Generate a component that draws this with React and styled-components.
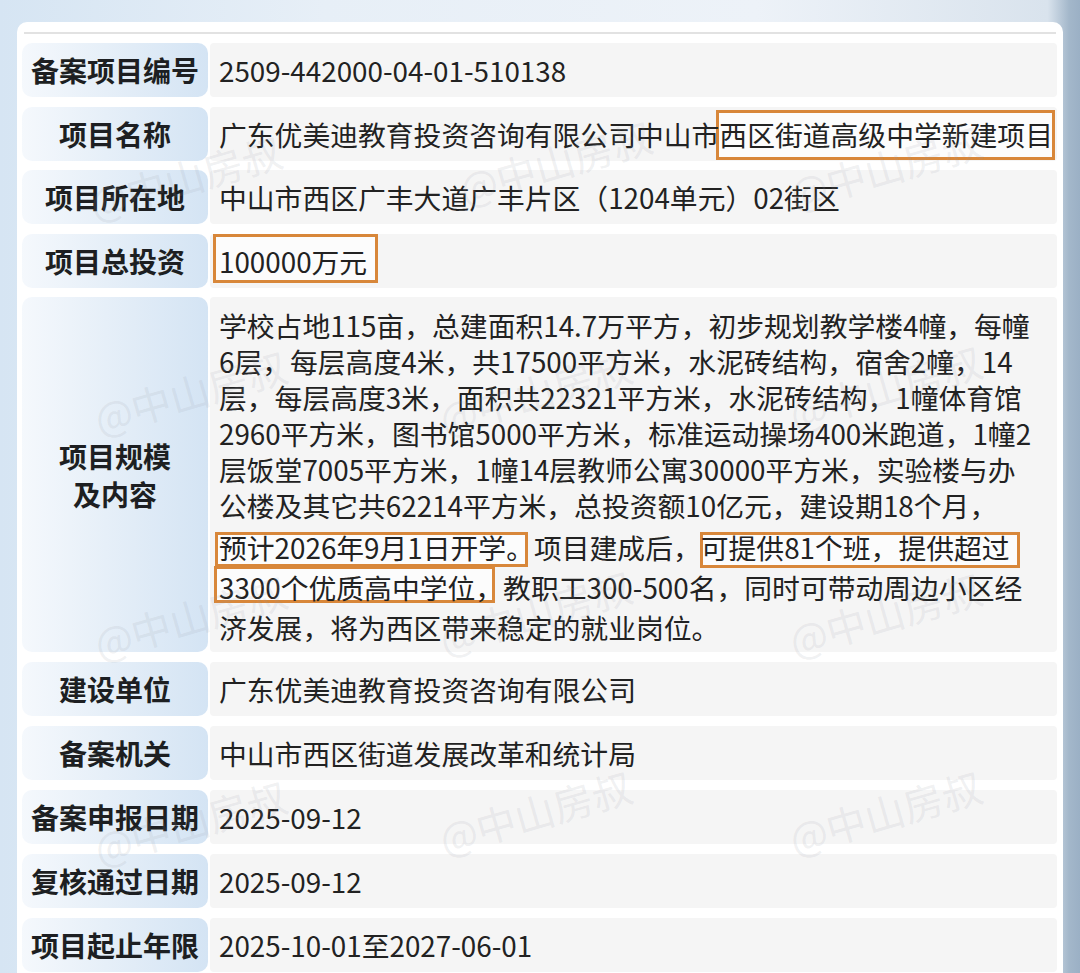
import React from 'react';
import styled, { createGlobalStyle } from 'styled-components';

const GlobalStyle = createGlobalStyle`
  html, body { margin: 0; padding: 0; }
  body { font-family: "Noto Sans CJK SC", "Noto Sans", sans-serif; }
`;

const Page = styled.div`
  position: relative;
  height: 973px;
  overflow: hidden;
  box-sizing: border-box;
  padding: 22px 17px 0;
  background: linear-gradient(90deg, #d6e5f3 0%, #e7eff7 30%, #edf2f8 70%, #d9e3ed 97%, #a3b7ca 99%, #9bb0c5 100%);
`;

const Card = styled.section`
  background: #fff;
  border-radius: 10px 10px 0 0;
  padding: 10px 6px 0 5px;
  height: 100%;
  box-sizing: border-box;
`;

const Rule = styled.div`
  height: 2px;
  margin: 0 1px 9px 2px;
  background: #e2e2e2;
`;

const Table = styled.div`
  display: flex;
  flex-direction: column;
`;

const Row = styled.div`
  display: grid;
  grid-template-columns: 186px 1fr;
  column-gap: 2px;
  min-height: 54px;
  margin-bottom: ${(p) => p.$gap}px;
`;

const Label = styled.div`
  display: flex;
  align-items: center;
  justify-content: center;
  text-align: center;
  border-radius: 10px;
  background: linear-gradient(90deg, rgba(238, 244, 251, 0.6) 0%, #e6eff8 45%, #d4e4f4 100%);
  font-weight: 700;
  font-size: 28px;
  line-height: 38px;
  color: #1d1f22;
  white-space: pre-line;
`;

const Value = styled.div`
  position: relative;
  z-index: 0;
  background: #f5f5f5;
  border-radius: 4px;
  padding: ${(p) => (p.$block ? '10px 0 5px 9px' : '0 0 0 9px')};
  font-size: 27.8px;
  line-height: ${(p) => (p.$block ? '36px' : '54px')};
  color: #222;
  white-space: nowrap;
`;

const Line = styled.div`
  height: ${(p) => p.$h || 36}px;
  line-height: ${(p) => p.$h || 36}px;
  margin-top: ${(p) => p.$mt || 0}px;
`;

const Mark = styled.span`
  position: relative;
  &::after {
    content: '';
    position: absolute;
    z-index: -1;
    top: ${(p) => p.$t}px;
    right: ${(p) => p.$r}px;
    bottom: ${(p) => p.$b}px;
    left: ${(p) => p.$l}px;
    border: 3px solid #d8873a;
    background: #fcfcfc;
    pointer-events: none;
  }
`;

const Watermarks = styled.div`
  position: absolute;
  inset: 0;
  pointer-events: none;
`;

const Watermark = styled.span`
  position: absolute;
  font-family: "Noto Sans CJK SC", sans-serif;
  font-size: 40px;
  color: rgba(150, 155, 165, 0.15);
  transform: rotate(-16deg);
  transform-origin: left center;
  white-space: nowrap;
`;

const marks = [
  [90, 175], [460, 160], [790, 165],
  [95, 390], [440, 390], [790, 385],
  [95, 615], [440, 610], [790, 612],
  [95, 820], [440, 810], [790, 810],
];

const rows = [
  { label: '备案项目编号', value: '2509-442000-04-01-510138', gap: 9.5 },
  {
    label: '项目名称',
    gap: 9.5,
    value: (
      <>
        广东优美迪教育投资咨询有限公司中山市
        <Mark $t={-4} $r={-2} $b={-6} $l={-3}>西区街道高级中学新建项目</Mark>
      </>
    ),
  },
  { label: '项目所在地', value: '中山市西区广丰大道广丰片区（1204单元）02街区', gap: 9.5 },
  {
    label: '项目总投资',
    gap: 9.5,
    value: <Mark $t={-7} $r={-11} $b={-2} $l={-6}>100000万元</Mark>,
  },
  { label: '项目规模\n及内容', block: true, gap: 10 },
  { label: '建设单位', value: '广东优美迪教育投资咨询有限公司', gap: 10 },
  { label: '备案机关', value: '中山市西区街道发展改革和统计局', gap: 10 },
  { label: '备案申报日期', value: '2025-09-12', gap: 10 },
  { label: '复核通过日期', value: '2025-09-12', gap: 10 },
  { label: '项目起止年限', value: '2025-10-01至2027-06-01', gap: 0 },
];

const Scope = () => (
  <>
    <Line>学校占地115亩，总建面积14.7万平方，初步规划教学楼4幢，每幢</Line>
    <Line>6层，每层高度4米，共17500平方米，水泥砖结构，宿舍2幢，14</Line>
    <Line>层，每层高度3米，面积共22321平方米，水泥砖结构，1幢体育馆</Line>
    <Line>2960平方米，图书馆5000平方米，标准运动操场400米跑道，1幢2</Line>
    <Line>层饭堂7005平方米，1幢14层教师公寓30000平方米，实验楼与办</Line>
    <Line>公楼及其它共62214平方米，总投资额10亿元，建设期18个月，</Line>
    <Line $h={40} $mt={4}>
      <Mark $t={5} $r={6} $b={0} $l={-4}>预计2026年9月1日开学。</Mark>
      项目建成后，
      <Mark $t={5} $r={-10} $b={-1} $l={-1}>可提供81个班，提供超过</Mark>
    </Line>
    <Line $h={40}>
      <Mark $t={-1} $r={8} $b={4} $l={-5}>3300个优质高中学位，</Mark>
      教职工300-500名，同时可带动周边小区经
    </Line>
    <Line $h={40}>济发展，将为西区带来稳定的就业岗位。</Line>
  </>
);

export default function App() {
  return (
    <Page>
      <GlobalStyle />
      <Card>
        <Rule />
        <Table>
          {rows.map((r) => (
            <Row key={r.label} $gap={r.gap}>
              <Label>{r.label}</Label>
              <Value $block={r.block}>{r.block ? <Scope /> : r.value}</Value>
            </Row>
          ))}
        </Table>
      </Card>
      <Watermarks>
        {marks.map(([x, y]) => (
          <Watermark key={`${x}-${y}`} style={{ left: x, top: y }}>@中山房叔</Watermark>
        ))}
      </Watermarks>
    </Page>
  );
}
